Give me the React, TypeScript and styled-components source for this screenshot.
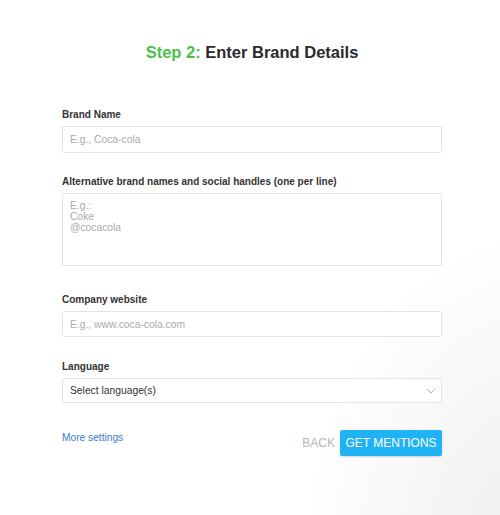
import React from "react";
import styled, { createGlobalStyle } from "styled-components";

const Global = createGlobalStyle`
  html, body { margin: 0; padding: 0; }
  body {
    font-family: "Liberation Sans", Arial, sans-serif;
    background: #fff;
  }
`;

const Page = styled.div`
  width: 500px;
  height: 515px;
  box-sizing: border-box;
  padding: 42px 58px 0 62px;
  background: radial-gradient(ellipse 240px 330px at 540px 560px, #ececec 0%, #f5f5f5 45%, #ffffff 100%);
  display: flex;
  flex-direction: column;
`;

const Title = styled.h1`
  margin: 0 0 46px;
  text-align: center;
  font-size: 16.5px;
  font-weight: bold;
  color: #2a2a2a;
  line-height: 21px;
`;

const Step = styled.span`
  color: #4cc04a;
`;

const Field = styled.div<{ $gap: number }>`
  display: flex;
  flex-direction: column;
  margin-bottom: ${(p) => p.$gap}px;
`;

const Label = styled.label`
  font-size: 10px;
  font-weight: bold;
  color: #333;
  line-height: 12px;
  margin-bottom: 5px;
`;

const Input = styled.input<{ $h: number }>`
  box-sizing: border-box;
  width: 380px;
  height: ${(p) => p.$h}px;
  border: 1px solid #e3e3e3;
  border-radius: 2px;
  padding: 0 7px;
  font-family: inherit;
  font-size: 10.3px;
  color: #333;
  outline: none;
  &::placeholder { color: #aaa; }
`;

const TextArea = styled.textarea`
  box-sizing: border-box;
  width: 380px;
  height: 73px;
  border: 1px solid #e3e3e3;
  border-radius: 2px;
  padding: 6px 7px;
  font-family: inherit;
  font-size: 10.3px;
  line-height: 11px;
  resize: none;
  outline: none;
  &::placeholder { color: #aaa; }
`;

const Select = styled.div`
  box-sizing: border-box;
  width: 380px;
  height: 25px;
  border: 1px solid #e3e3e3;
  border-radius: 2px;
  padding: 0 5px 0 7px;
  display: flex;
  align-items: center;
  justify-content: space-between;
  font-size: 10.3px;
  color: #333;
  background: #fff;
`;

const Footer = styled.div`
  display: flex;
  justify-content: space-between;
  align-items: flex-start;
`;

const Link = styled.a`
  font-size: 10.2px;
  line-height: 13px;
  color: #3a7bc8;
  text-decoration: none;
  margin-top: 1px;
`;

const Actions = styled.div`
  display: flex;
  align-items: center;
  gap: 5px;
`;

const BackButton = styled.button`
  border: none;
  background: none;
  padding: 0;
  font-family: inherit;
  font-size: 12px;
  color: #b5b5b5;
`;

const PrimaryButton = styled.button`
  border: none;
  background: #1fb3f5;
  color: #fff;
  font-family: inherit;
  font-size: 12px;
  height: 26px;
  width: 102px;
  padding: 0;
  border-radius: 2px;
  box-shadow: 0 1px 2px rgba(0,0,0,0.15);
`;

export default function App() {
  return (
    <>
      <Global />
      <Page>
        <Title>
          <Step>Step 2:</Step> Enter Brand Details
        </Title>
        <Field $gap={23}>
          <Label>Brand Name</Label>
          <Input $h={27} placeholder="E.g., Coca-cola" />
        </Field>
        <Field $gap={28}>
          <Label>Alternative brand names and social handles (one per line)</Label>
          <TextArea placeholder={"E.g.:\nCoke\n@cocacola"} />
        </Field>
        <Field $gap={24}>
          <Label>Company website</Label>
          <Input $h={26} placeholder="E.g., www.coca-cola.com" />
        </Field>
        <Field $gap={27}>
          <Label>Language</Label>
          <Select>
            <span>Select language(s)</span>
            <svg width="10" height="6" viewBox="0 0 10 6">
              <path d="M1 1l4 4 4-4" fill="none" stroke="#b0b0b0" strokeWidth="1" />
            </svg>
          </Select>
        </Field>
        <Footer>
          <Link href="#">More settings</Link>
          <Actions>
            <BackButton>BACK</BackButton>
            <PrimaryButton>GET MENTIONS</PrimaryButton>
          </Actions>
        </Footer>
      </Page>
    </>
  );
}
